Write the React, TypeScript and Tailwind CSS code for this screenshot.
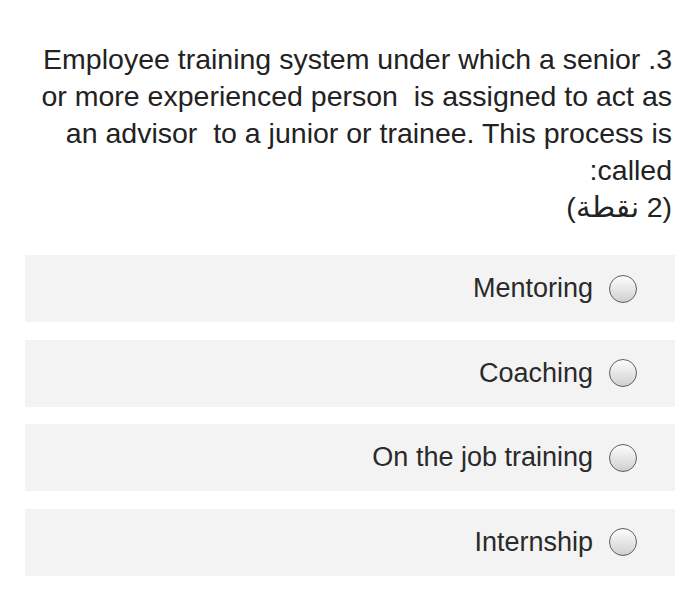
const questionLines = [
  "Employee training system under which a senior .3",
  "or more experienced person  is assigned to act as",
  "an advisor  to a junior or trainee. This process is",
  ":called",
];

const options = ["Mentoring", "Coaching", "On the job training", "Internship"];

const Radio = () => (
  <span className="inline-block w-[28px] h-[28px] rounded-full border-[1.5px] border-[#5f5f5f] bg-gradient-to-b from-[#fdfdfd] to-[#d0d0d0] shrink-0" />
);

export default function App() {
  return (
    <div
      className="w-[700px] h-[614px] bg-white pt-[41px] px-[25px]"
      style={{ fontFamily: '"Liberation Sans", Arial, "Noto Sans", sans-serif' }}
    >
      <div className="pr-[3px] text-[28.5px] leading-[37px] text-[#222] text-right">
        {questionLines.map((line) => (
          <div key={line} className="whitespace-pre">
            {line}
          </div>
        ))}
        <div dir="rtl" className="text-right">
          (2 نقطة)
        </div>
      </div>

      <div className="mt-[29px] flex flex-col gap-[17.5px]">
        {options.map((opt) => (
          <div
            key={opt}
            className="h-[67px] bg-[#f3f3f3] flex items-center justify-end gap-[16px] pr-[38px]"
          >
            <span className="text-[27px] text-[#2a2a2a]">{opt}</span>
            <Radio />
          </div>
        ))}
      </div>
    </div>
  );
}
